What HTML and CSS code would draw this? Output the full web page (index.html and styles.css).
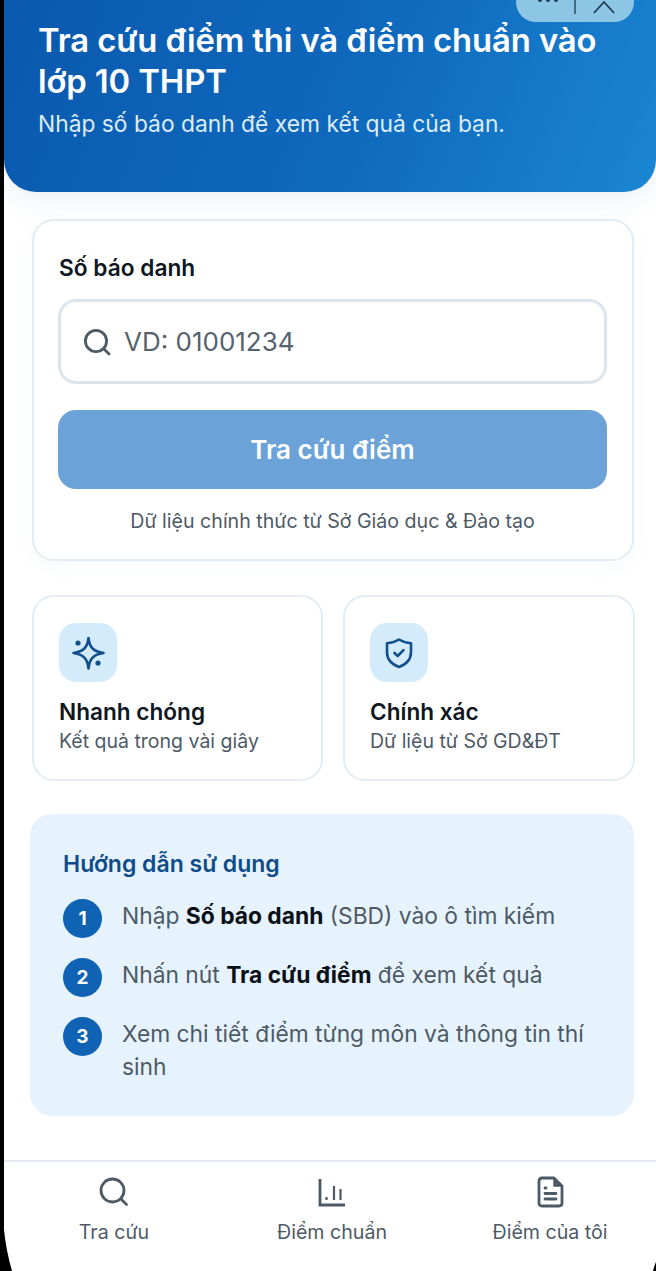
FILE: index.html
```html
<!DOCTYPE html>
<html lang="vi">
<head>
<meta charset="utf-8">
<title>Tra cứu điểm thi</title>
<link rel="stylesheet" href="styles.css">
</head>
<body>
<div class="screen">
  <header class="hero">
    <div class="pill" aria-hidden="true">
      <svg class="pill-icon" width="118" height="22" viewBox="0 0 118 22"><circle cx="24" cy="0" r="2" fill="#1f3a50"/><circle cx="32" cy="0" r="2" fill="#1f3a50"/><circle cx="40" cy="0" r="2" fill="#1f3a50"/><path d="M59 0V14" stroke="#2a4a60" stroke-width="1.5"/><path d="M78 13 88 2 98 13" fill="none" stroke="#1f3a50" stroke-width="1.800"/></svg>
    </div>
    <h1 class="hero-title">Tra cứu điểm thi và điểm chuẩn vào lớp 10 THPT</h1>
    <p class="hero-sub">Nhập số báo danh để xem kết quả của bạn.</p>
  </header>

  <main class="content">
    <section class="card search-card">
      <label class="field-label">Số báo danh</label>
      <div class="input">
        <svg class="input-icon" width="28" height="28" viewBox="0 0 28 28" fill="none" stroke="#4d5a66" stroke-width="2.800" stroke-linecap="round"><circle cx="13" cy="13" r="10.600"/><path d="M21 21l5 5"/></svg>
        <span class="placeholder">VD: 01001234</span>
      </div>
      <button class="submit" type="button">Tra cứu điểm</button>
      <p class="source">Dữ liệu chính thức từ Sở Giáo dục &amp; Đào tạo</p>
    </section>

    <section class="features">
      <article class="card feature">
        <div class="feature-icon">
          <svg width="34" height="34" viewBox="0 0 34 34" fill="none" stroke="#134f8c" stroke-width="2.600" stroke-linejoin="round"><path d="M17.500 2C18.500 11.500 22.500 15.500 32.500 17 22.500 18.500 18.500 22.500 17.500 32.500 16.500 22.500 12.500 18.500 2.500 17 12.500 15.500 16.500 11.500 17.500 2Z"/><circle cx="7" cy="7" r="2.600" fill="#134f8c" stroke="none"/><circle cx="27" cy="27" r="2.600" fill="#134f8c" stroke="none"/></svg>
        </div>
        <h2 class="feature-title">Nhanh chóng</h2>
        <p class="feature-text">Kết quả trong vài giây</p>
      </article>
      <article class="card feature">
        <div class="feature-icon">
          <svg width="30" height="32" viewBox="0 0 30 32" fill="none" stroke="#134f8c" stroke-width="2.600" stroke-linecap="round" stroke-linejoin="round"><path d="M15 2.500C19 5 22.500 6 27 6.200V15C27 22.500 22 27.500 15 30 8 27.500 3 22.500 3 15V6.200C7.500 6 11 5 15 2.500Z"/><path d="M10.500 16l3.200 3 5.800-5.800"/></svg>
        </div>
        <h2 class="feature-title">Chính xác</h2>
        <p class="feature-text">Dữ liệu từ Sở GD&amp;ĐT</p>
      </article>
    </section>

    <section class="guide">
      <h2 class="guide-title">Hướng dẫn sử dụng</h2>
      <ol class="steps">
        <li class="step"><span class="step-num">1</span><span class="step-text">Nhập <b>Số báo danh</b> (SBD) vào ô tìm kiếm</span></li>
        <li class="step"><span class="step-num">2</span><span class="step-text">Nhấn nút <b>Tra cứu điểm</b> để xem kết quả</span></li>
        <li class="step"><span class="step-num">3</span><span class="step-text">Xem chi tiết điểm từng môn và thông tin thí sinh</span></li>
      </ol>
    </section>
  </main>

  <nav class="nav">
    <a class="nav-item">
      <svg width="32" height="32" viewBox="0 0 32 32" fill="none" stroke="#4d5a66" stroke-width="2.800" stroke-linecap="round"><circle cx="14.500" cy="14.500" r="11.500"/><path d="M23 23l5.500 5.500"/></svg>
      <span>Tra cứu</span>
    </a>
    <a class="nav-item">
      <svg width="32" height="32" viewBox="0 0 32 32" fill="none" stroke="#4d5a66" stroke-width="2.200"><path d="M4 3V29H29" stroke-width="2.800"/><path d="M10.500 21V24"/><path d="M18 10V24"/><path d="M24.500 13V24"/></svg>
      <span>Điểm chuẩn</span>
    </a>
    <a class="nav-item">
      <svg width="32" height="32" viewBox="0 0 32 32" fill="none" stroke="#4d5a66" stroke-width="2.800" stroke-linejoin="round" stroke-linecap="round"><path d="M8 2H20L28 10V27C28 29 27 30 25 30H8C6 30 5 29 5 27V5C5 3 6 2 8 2Z"/><path d="M20 2V10H28" fill="#4d5a66" stroke-width="1.500"/><path d="M11 12h1M11 17.500h11M11 23h11"/></svg>
      <span>Điểm của tôi</span>
    </a>
  </nav>
</div>
</body>
</html>
```
FILE: styles.css
```css
* { box-sizing: border-box; }
html, body { margin: 0; padding: 0; height: 100%; background: #000; overflow: hidden; }
body { font-family: Inter, "Noto Sans", "Liberation Sans", sans-serif; color: #0f1722; }

.screen {
  width: 656px;
  height: 1271px;
  padding-left: 4px;
  background: #fff;
  display: flex;
  flex-direction: column;
  clip-path: path("M4 0H656V1262Q654 1266 653 1271H12Q6 1250 4 1230Z");
}

.hero {
  position: relative;
  height: 192px;
  padding: 20px 20px 0 34px;
  background: linear-gradient(112deg, #0a59ae 0%, #0f69bd 55%, #1a86d2 100%);
  border-radius: 0 0 32px 32px;
  box-shadow: 0 10px 24px rgba(90, 130, 170, .10);
  flex: none;
}
.pill {
  position: absolute;
  top: 0;
  right: 22px;
  width: 118px;
  height: 22px;
  background: #8cc6e4;
  border-radius: 0 0 20px 20px;
}
.pill-icon { display: block; }
.hero-title {
  margin: 0;
  font-size: 32.800px;
  line-height: 41px;
  font-weight: 600;
  color: #fff;
  letter-spacing: -.1px;
}
.hero-sub {
  margin: 6px 0 0;
  font-size: 22.800px;
  line-height: 32px;
  color: #dcecf8;
}

.content {
  flex: 1;
  padding: 27px 22px 0 28px;
  display: flex;
  flex-direction: column;
}
.card {
  background: #fff;
  border: 2px solid #e4ecf3;
  border-radius: 22px;
}
.search-card {
  height: 342px;
  padding: 33px 25px 0 24px;
  box-shadow: 0 6px 16px rgba(120, 150, 180, .06);
}
.field-label {
  display: block;
  margin-left: 1px;
  font-size: 22.700px;
  line-height: 28px;
  font-weight: 600;
}
.input {
  margin-top: 17px;
  height: 85px;
  border: 3px solid #dbe5ee;
  border-radius: 18px;
  display: flex;
  align-items: center;
  gap: 13px;
  padding-left: 22px;
}
.input-icon { flex: none; }
.placeholder { font-size: 26px; color: #56626e; }
.submit {
  display: block;
  width: 100%;
  height: 79px;
  margin-top: 26px;
  border: 0;
  border-radius: 18px;
  background: #6ba2d8;
  color: #fff;
  font: 600 26px Inter, "Noto Sans", sans-serif;
}
.source {
  margin: 19px 0 0;
  text-align: center;
  font-size: 19.600px;
  line-height: 26px;
  color: #4d5a66;
}

.features {
  margin-top: 34px;
  display: grid;
  grid-template-columns: 291px 292px;
  gap: 20px;
}
.feature {
  height: 186px;
  padding: 26px 25px 0;
}
.feature-icon {
  width: 58px;
  height: 59px;
  border-radius: 17px;
  background: #d4ebfb;
  display: flex;
  align-items: center;
  justify-content: center;
}
.feature-title {
  margin: 15px 0 0;
  font-size: 22.600px;
  line-height: 30px;
  font-weight: 600;
}
.feature-text {
  margin: 1px 0 0;
  font-size: 19.500px;
  line-height: 26px;
  color: #4d5a66;
}

.guide {
  margin: 33px 0 0 -2px;
  height: 302px;
  padding: 36px 26px 0 33px;
  background: #e6f3fd;
  border-radius: 22px;
}
.guide-title {
  margin: 0;
  font-size: 23px;
  line-height: 28px;
  font-weight: 600;
  color: #0f4c8a;
}
.steps {
  list-style: none;
  margin: 21px 0 0;
  padding: 0;
  display: flex;
  flex-direction: column;
  gap: 20px;
}
.step {
  display: flex;
  gap: 20px;
  min-height: 39px;
}
.step-num {
  flex: none;
  width: 39px;
  height: 39px;
  border-radius: 50%;
  background: #0f62b4;
  color: #fff;
  font-size: 19px;
  font-weight: 700;
  display: flex;
  align-items: center;
  justify-content: center;
}
.step-text {
  font-size: 22.800px;
  line-height: 33px;
  color: #4d5a66;
}
.step-text b { font-weight: 700; color: #0a1018; }

.nav {
  flex: none;
  height: 111px;
  border-top: 2px solid #e3e8f1;
  padding: 14px 0 0 1px;
  display: grid;
  grid-template-columns: repeat(3, 218px);
}
.nav-item {
  display: flex;
  flex-direction: column;
  align-items: center;
  gap: 11px;
  font-size: 19.600px;
  line-height: 26px;
  color: #4d5a66;
}
```
